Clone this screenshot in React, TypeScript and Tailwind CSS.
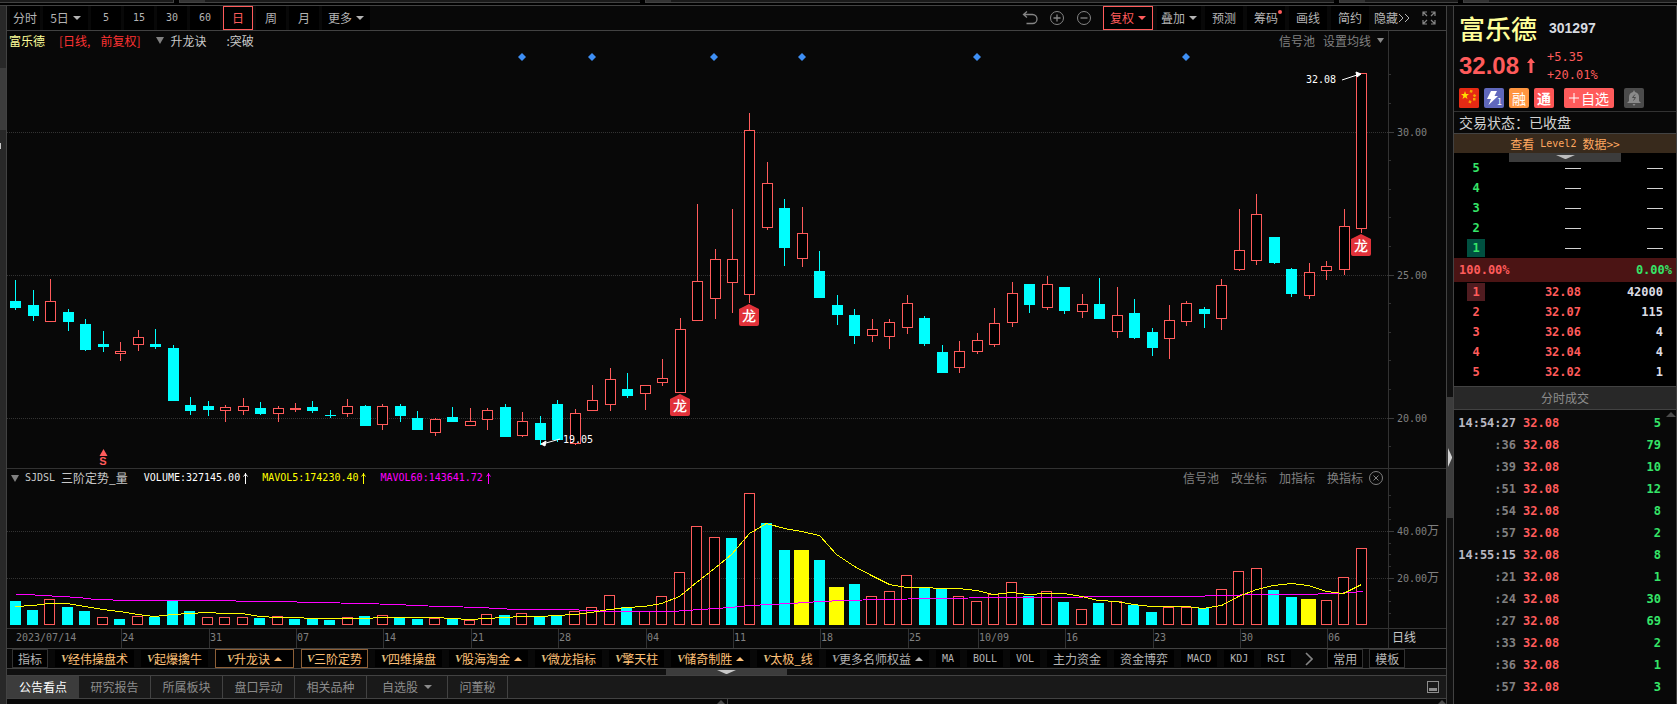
import type { ReactNode } from "react";
import clsx from "clsx";

type Tone = "up" | "down" | "mark";

// [high, body top, body bottom, low, tone]
type Candle = [number, number, number, number, "up" | "down"];

const CANDLES: Candle[] = [
  [280, 301, 308, 310, "down"],
  [290, 305, 316, 321, "down"],
  [279, 301, 322, 322, "up"],
  [309, 312, 322, 331, "down"],
  [319, 324, 350, 351, "down"],
  [331, 344, 347, 352, "down"],
  [342, 351, 354, 361, "up"],
  [330, 337, 345, 351, "up"],
  [329, 344, 347, 349, "down"],
  [345, 348, 401, 401, "down"],
  [397, 405, 411, 415, "down"],
  [401, 406, 410, 416, "down"],
  [405, 407, 411, 422, "up"],
  [398, 406, 411, 415, "up"],
  [402, 408, 414, 415, "down"],
  [406, 408, 414, 422, "up"],
  [403, 408, 410, 412, "up"],
  [401, 407, 411, 413, "down"],
  [410, 415, 416, 418, "down"],
  [399, 406, 414, 417, "up"],
  [405, 406, 426, 426, "down"],
  [404, 406, 425, 430, "up"],
  [404, 406, 416, 422, "down"],
  [411, 418, 430, 430, "down"],
  [418, 419, 433, 436, "up"],
  [407, 417, 422, 422, "down"],
  [408, 421, 426, 426, "up"],
  [408, 410, 420, 430, "up"],
  [404, 407, 437, 437, "down"],
  [412, 421, 436, 437, "up"],
  [416, 423, 440, 445, "down"],
  [400, 404, 440, 442, "down"],
  [409, 413, 444, 445, "up"],
  [385, 400, 411, 411, "up"],
  [368, 379, 405, 411, "up"],
  [373, 389, 396, 398, "down"],
  [385, 385, 394, 410, "up"],
  [359, 378, 383, 386, "up"],
  [318, 329, 393, 393, "up"],
  [204, 281, 321, 321, "up"],
  [249, 259, 299, 319, "up"],
  [209, 259, 283, 313, "up"],
  [113, 130, 295, 303, "up"],
  [162, 183, 228, 230, "up"],
  [199, 208, 248, 266, "down"],
  [207, 233, 259, 267, "up"],
  [251, 271, 298, 298, "down"],
  [295, 305, 315, 325, "down"],
  [309, 315, 336, 344, "down"],
  [319, 329, 336, 342, "up"],
  [319, 322, 337, 349, "up"],
  [295, 303, 328, 334, "up"],
  [316, 318, 344, 346, "down"],
  [345, 352, 373, 373, "down"],
  [341, 351, 368, 373, "up"],
  [333, 340, 352, 354, "up"],
  [308, 323, 345, 347, "up"],
  [282, 293, 323, 327, "up"],
  [284, 284, 305, 313, "down"],
  [276, 284, 308, 310, "up"],
  [287, 287, 311, 314, "down"],
  [294, 304, 312, 318, "up"],
  [278, 304, 319, 319, "down"],
  [287, 315, 332, 338, "up"],
  [299, 313, 338, 339, "down"],
  [328, 332, 348, 356, "down"],
  [305, 320, 339, 359, "up"],
  [301, 303, 322, 326, "up"],
  [307, 309, 314, 328, "down"],
  [279, 285, 319, 330, "up"],
  [209, 250, 270, 271, "up"],
  [194, 214, 261, 265, "up"],
  [237, 237, 263, 264, "down"],
  [268, 269, 294, 297, "down"],
  [263, 272, 296, 299, "up"],
  [261, 266, 271, 280, "up"],
  [209, 226, 270, 275, "up"],
  [73, 73, 229, 233, "up"],
];

const VOLUME_TOPS = [
  601, 610, 599, 607, 611, 617, 619, 616, 617, 601, 611, 617, 617, 617, 618, 616, 619, 619, 620, 617,
  616, 615, 618, 619, 618, 618, 620, 614, 615, 613, 616, 615, 611, 607, 595, 607, 611, 596, 572, 526,
  537, 538, 493, 523, 550, 550, 560, 587, 584, 596, 591, 575, 588, 589, 596, 601, 594, 582, 596, 591,
  602, 609, 603, 601, 605, 612, 607, 607, 608, 589, 571, 568, 590, 597, 599, 600, 577, 548,
];

const VOLUME_TONES =
  "CCRCCRCRCCCRRRCRCCCRCRCCRCRRCRCCRRRCRRRRRCRCCYCYCRRRCCRRRRCRCRCRCCRRCRRRCCYRRR";

const TONES: Record<string, Tone> = { R: "up", C: "down", Y: "mark" };

const VOLUME_BASE = 625;

const MA60 =
  "15,594 25,594 43,595 60,596 78,597 95,599 130,600 200,600 270,601 322,602 357,603 400,604 410,605 445,606 480,607 515,609 567,609 590,610 607,611 672,611 700,609 730,607 750,605 770,604 790,603 820,601 843,600 882,599 933,598 1004,597 1161,596 1180,596 1230,595 1249,594 1300,594 1335,593 1351,592 1363,591";

const PRICE_LINES = [
  { y: 132, label: "30.00" },
  { y: 275, label: "25.00" },
  { y: 418, label: "20.00" },
];

const PRICE_TICKS = [74, 103, 160, 189, 217, 246, 303, 332, 360, 389, 446];
const VOLUME_TICKS = [495, 507, 519, 543, 554, 566, 590, 601, 613];

const DATES: [number, string][] = [
  [121, "24"],
  [209, "31"],
  [296, "07"],
  [383, "14"],
  [471, "21"],
  [558, "28"],
  [646, "04"],
  [733, "11"],
  [820, "18"],
  [908, "25"],
  [978, "10/09"],
  [1065, "16"],
  [1153, "23"],
  [1240, "30"],
  [1327, "06"],
];

const SIGNALS = [522, 592, 714, 802, 977, 1186];

const DRAGONS = [
  { x: 680, y: 394 },
  { x: 749, y: 304 },
  { x: 1361, y: 234 },
];

const INDICATORS = [
  { name: "经伟操盘术" },
  { name: "起爆擒牛" },
  { name: "升龙诀", menu: true, active: true, wide: true },
  { name: "三阶定势", active: true },
  { name: "四维操盘" },
  { name: "股海淘金", menu: true },
  { name: "微龙指标" },
  { name: "擎天柱" },
  { name: "储奇制胜", menu: true },
  { name: "太极_线" },
];

const ASKS = ["5", "4", "3", "2", "1"];

const BIDS = [
  ["1", "32.08", "42000"],
  ["2", "32.07", "115"],
  ["3", "32.06", "4"],
  ["4", "32.04", "4"],
  ["5", "32.02", "1"],
];

const TRADES = [
  ["14:54:27", "5"],
  [":36", "79"],
  [":39", "10"],
  [":51", "12"],
  [":54", "8"],
  [":57", "2"],
  ["14:55:15", "8"],
  [":21", "1"],
  [":24", "30"],
  [":27", "69"],
  [":33", "2"],
  [":36", "1"],
  [":57", "3"],
];

const candleX = (i: number) => Math.round(15.3 + i * 17.48);
const volumeX = (i: number) => Math.floor(15 + i * 17.481);

function movingAverage() {
  const lead = [606, 605, 603, 603];
  return VOLUME_TOPS.map((_, i) => {
    if (i < 4) return `${volumeX(i)},${lead[i]}`;
    const avg = VOLUME_TOPS.slice(i - 4, i + 1).reduce((a, b) => a + b, 0) / 5;
    return `${volumeX(i)},${Math.round(avg)}`;
  }).join(" ");
}

function Caret({ up, className }: { up?: boolean; className?: string }) {
  return (
    <svg viewBox="0 0 8 4" className={clsx("h-1 w-2 shrink-0", className)} fill="currentColor" aria-hidden="true">
      <path d={up ? "M0 4L4 0L8 4Z" : "M0 0H8L4 4Z"} />
    </svg>
  );
}

function Mono({ children, className }: { children: ReactNode; className?: string }) {
  return <span className={clsx("font-['DejaVu_Sans_Mono',monospace] text-[10px]", className)}>{children}</span>;
}

function TopStrip() {
  return (
    <div className="flex h-[6px] border-b border-[#424242] bg-black">
      <div className="flex h-[3px] w-full gap-[5px]">
        <div className="w-[174px] border-r border-b border-[#424242] bg-[#1a1a1a]" />
        {["flex-[462]", "flex-[690]", "flex-[118]", "flex-[214]"].map((grow) => (
          <div key={grow} className={clsx("border-b border-l border-[#424242] bg-[#1a1a1a]", grow)}>
            <div className="h-[2px] w-[25px] bg-[#333333]" />
          </div>
        ))}
      </div>
    </div>
  );
}

function ToolButton({ children, className }: { children: ReactNode; className?: string }) {
  return (
    <button
      type="button"
      className={clsx("flex h-6 shrink-0 items-center justify-center whitespace-nowrap", className)}
    >
      {children}
    </button>
  );
}

function Toolbar() {
  return (
    <div className="flex h-[25px] items-start justify-between border-b border-[#424242] text-[#b4b4b4]">
      <div className="flex gap-[3px] pl-[3px]">
        <ToolButton className="w-[30px] bg-black">分时</ToolButton>
        <ToolButton className="w-[45px] gap-1 bg-black">
          <span>5日</span>
          <Caret />
        </ToolButton>
        {["5", "15", "30", "60"].map((m) => (
          <ToolButton key={m} className="w-[30px] bg-black">
            <Mono>{m}</Mono>
          </ToolButton>
        ))}
        <ToolButton className="w-[30px] border border-[#ff5b5b] bg-black text-[#ff5b5b]">日</ToolButton>
        <ToolButton className="w-[30px] bg-black">周</ToolButton>
        <ToolButton className="w-[30px] bg-black">月</ToolButton>
        <ToolButton className="w-[48px] gap-1 bg-black">
          更多
          <Caret />
        </ToolButton>
      </div>

      <div className="flex gap-1 pr-[10px]">
        <ToolButton className="w-[23px]">
          <svg viewBox="0 0 16 16" className="size-4" fill="none" stroke="#858585" aria-label="撤销">
            <path d="M5 1.5L1.5 4.5L5 7.5M2 4.5H10.5A4.5 4.5 0 0 1 10.5 13.5H4.5" strokeWidth="1.3" />
          </svg>
        </ToolButton>
        <ToolButton className="w-[23px]">
          <svg viewBox="0 0 16 16" className="size-4" fill="none" stroke="#858585" aria-label="放大">
            <circle cx="8" cy="8" r="6.5" />
            <path d="M4.5 8H11.5M8 4.5V11.5" strokeWidth="1.3" />
          </svg>
        </ToolButton>
        <ToolButton className="w-[23px]">
          <svg viewBox="0 0 16 16" className="size-4" fill="none" stroke="#858585" aria-label="缩小">
            <circle cx="8" cy="8" r="6.5" />
            <path d="M4.5 8H11.5" strokeWidth="1.3" />
          </svg>
        </ToolButton>
        <ToolButton className="ml-1 w-[50px] gap-1 border border-[#ff5b5b] bg-black text-[#ff5b5b]">
          复权
          <Caret />
        </ToolButton>
        <ToolButton className="w-[44px] gap-1 bg-black">
          叠加
          <Caret />
        </ToolButton>
        <ToolButton className="w-[38px] bg-black">预测</ToolButton>
        <ToolButton className="relative w-[38px] bg-black">
          筹码
          <span className="absolute top-1 right-[3px] size-1 rounded-full bg-[#ff5b5b]" />
        </ToolButton>
        <ToolButton className="w-[38px] bg-black">画线</ToolButton>
        <ToolButton className="w-[38px] bg-black">简约</ToolButton>
        <ToolButton className="w-[38px]">
          隐藏
          <svg viewBox="0 0 12 10" className="h-[10px] w-3" fill="none" stroke="currentColor" aria-hidden="true">
            <path d="M1 1L5 5L1 9M7 1L11 5L7 9" />
          </svg>
        </ToolButton>
        <ToolButton className="w-[21px] justify-end">
          <svg viewBox="0 0 14 14" className="size-[14px]" fill="none" stroke="#858585" strokeWidth="1.2" aria-label="全屏">
            <path d="M1 5V1H5M1 1L5 5M9 1H13V5M13 1L9 5M1 9V13H5M1 13L5 9M13 9V13H9M13 13L9 9" />
          </svg>
        </ToolButton>
      </div>
    </div>
  );
}

function PriceHeader() {
  return (
    <div className="flex h-[21px] text-xs leading-[18px]">
      <div className="flex flex-1 items-center justify-between pr-1 pb-[2px] pl-[2px]">
        <div className="flex items-center whitespace-nowrap">
          <span className="text-[#ffff99]">富乐德</span>
          <span className="ml-[14px] flex gap-[10px] text-[#ff3232]">
            <span>[日线,</span>
            <span>前复权]</span>
          </span>
          <svg viewBox="0 0 8 7" className="ml-4 h-[7px] w-2" fill="#808080" aria-hidden="true">
            <path d="M0 0H8L4 7Z" />
          </svg>
          <span className="ml-[6px] text-[#c8c8c8]">升龙诀</span>
          <span className="ml-5 text-[#c8c8c8]">:突破</span>
        </div>
        <div className="flex items-center gap-2 text-[#808080]">
          <button type="button">信号池</button>
          <button type="button" className="flex items-center gap-[6px]">
            设置均线
            <svg viewBox="0 0 7 5" className="h-[5px] w-[7px]" fill="#8a8a8a" aria-hidden="true">
              <path d="M0 0H7L3.5 5Z" />
            </svg>
          </button>
        </div>
      </div>
      <div className="w-[58px] border-l border-[#323232]" />
    </div>
  );
}

function PriceChart() {
  return (
    <svg
      viewBox="7 52 1439 416"
      className="block h-auto w-full overflow-visible font-['DejaVu_Sans_Mono',monospace] text-[10px]"
      role="img"
      aria-label="K线"
    >
      <g shapeRendering="crispEdges" fill="none">
        <path d="M1388.5 52V468" stroke="#323232" />
        {PRICE_LINES.map(({ y }) => (
          <g key={y}>
            <path d={`M7 ${y + 0.5}H1388`} stroke="#333333" strokeDasharray="1 1" />
            <path d={`M1388 ${y + 0.5}H1394`} stroke="#3c3c3c" />
          </g>
        ))}
        {PRICE_TICKS.map((y) => (
          <path key={y} d={`M1388 ${y + 0.5}H1391`} stroke="#323232" />
        ))}
        {CANDLES.map(([high, top, bottom, low, tone], i) => {
          const x = candleX(i);
          if (tone === "down") {
            return (
              <g key={i} fill="#00ffff">
                <rect x={x} y={high} width="1" height={low - high} />
                <rect x={x - 5} y={top} width="11" height={bottom - top} />
              </g>
            );
          }
          return (
            <g key={i} stroke="#ff5b5b">
              <path d={`M${x + 0.5} ${high}V${top}M${x + 0.5} ${bottom}V${low}`} />
              <rect x={x - 4.5} y={top + 0.5} width="10" height={bottom - top - 1} fill="#000000" />
            </g>
          );
        })}
      </g>

      {PRICE_LINES.map(({ y, label }) => (
        <text key={y} x="1397" y={y + 4} fill="#808080">
          {label}
        </text>
      ))}

      {SIGNALS.map((x) => (
        <path key={x} d={`M${x} 53L${x + 4} 57L${x} 61L${x - 4} 57Z`} fill="#3e8ff5" />
      ))}

      {DRAGONS.map(({ x, y }) => (
        <g key={x}>
          <path
            d={`M${x} ${y}L${x + 10} ${y + 5}V${y + 20}Q${x + 10} ${y + 22} ${x + 8} ${y + 22}H${x - 8}Q${x - 10} ${y + 22} ${x - 10} ${y + 20}V${y + 5}Z`}
            fill="#e2323a"
          />
          <text
            x={x}
            y={y + 17}
            textAnchor="middle"
            fill="#ffffff"
            className="font-['Noto_Sans_CJK_SC',sans-serif] text-[14px] font-medium"
          >
            龙
          </text>
        </g>
      ))}

      <path d="M103.5 449L107.5 456H99.5Z" fill="#ff5b5b" />
      <text x="103" y="465" textAnchor="middle" fill="#ff5b5b" className="font-['Liberation_Sans',sans-serif] text-[11px] font-bold">
        S
      </text>

      <g fill="#ffffff" stroke="#ffffff">
        <path d="M1342 80L1357 75" />
        <path d="M1356 72L1361 74L1357 77Z" />
        <path d="M560 439L546 443" />
        <path d="M541 444L546 441L545 446Z" />
      </g>
      <text x="1306" y="83" fill="#ffffff">
        32.08
      </text>
      <text x="563" y="443" fill="#ffffff">
        19.05
      </text>
    </svg>
  );
}

function VolumeStat({ children, className }: { children: ReactNode; className?: string }) {
  return (
    <span className={clsx("flex items-center gap-[3px]", className)}>
      <Mono>{children}</Mono>
      <svg viewBox="0 0 5 11" className="h-[11px] w-[5px]" fill="none" stroke="currentColor" aria-hidden="true">
        <path d="M2.5 0V11M0.5 3.5L2.5 1L4.5 3.5" />
      </svg>
    </span>
  );
}

function VolumeHeader() {
  return (
    <div className="flex h-5 border-t border-[#323232] text-xs leading-[18px]">
      <div className="flex flex-1 items-center justify-between pr-[5px] pb-px pl-1">
        <div className="flex items-center whitespace-nowrap">
          <svg viewBox="0 0 8 7" className="h-[7px] w-2" fill="#808080" aria-hidden="true">
            <path d="M0 0H8L4 7Z" />
          </svg>
          <span className="ml-[6px] flex gap-[6px] text-[#c8c8c8]">
            <Mono>SJDSL</Mono>
            <span>三阶定势_量</span>
          </span>
          <VolumeStat className="ml-4 text-white">VOLUME:327145.00</VolumeStat>
          <VolumeStat className="ml-[14px] text-[#ffff00]">MAVOL5:174230.40</VolumeStat>
          <VolumeStat className="ml-[14px] text-[#ff00ff]">MAVOL60:143641.72</VolumeStat>
        </div>
        <div className="flex items-center gap-3 text-[#808080]">
          <button type="button">信号池</button>
          <button type="button">改坐标</button>
          <button type="button">加指标</button>
          <div className="flex items-center gap-[6px]">
            <button type="button">换指标</button>
            <button type="button" aria-label="关闭">
              <svg viewBox="0 0 14 14" className="size-[14px]" fill="none" stroke="currentColor">
                <circle cx="7" cy="7" r="6.5" />
                <path d="M4.5 4.5L9.5 9.5M9.5 4.5L4.5 9.5" />
              </svg>
            </button>
          </div>
        </div>
      </div>
      <div className="w-[58px] border-l border-[#323232]" />
    </div>
  );
}

function VolumeChart() {
  return (
    <svg
      viewBox="7 488 1439 160"
      className="block h-auto w-full font-['DejaVu_Sans_Mono',monospace] text-[10px]"
      role="img"
      aria-label="成交量"
    >
      <g shapeRendering="crispEdges" fill="none">
        <path d="M1388.5 488V648M7 628.5H1446" stroke="#323232" />
        {[531, 578].map((y) => (
          <g key={y}>
            <path d={`M7 ${y + 0.5}H1388`} stroke="#333333" strokeDasharray="1 1" />
            <path d={`M1388 ${y + 0.5}H1394`} stroke="#3c3c3c" />
          </g>
        ))}
        {VOLUME_TICKS.map((y) => (
          <path key={y} d={`M1388 ${y + 0.5}H1391`} stroke="#323232" />
        ))}
        {VOLUME_TOPS.map((top, i) => {
          const x = volumeX(i);
          const tone = TONES[VOLUME_TONES[i]];
          if (tone === "mark") {
            return <rect key={i} x={x - 7} y={top} width="15" height={VOLUME_BASE - top} fill="#ffff00" />;
          }
          if (tone === "down") {
            return <rect key={i} x={x - 5} y={top} width="11" height={VOLUME_BASE - top} fill="#00ffff" />;
          }
          return (
            <rect
              key={i}
              x={x - 4.5}
              y={top + 0.5}
              width="10"
              height={VOLUME_BASE - top - 1}
              stroke="#ff5b5b"
              fill="#000000"
            />
          );
        })}
        <g transform="translate(0.5 0.5)">
          <polyline points={MA60} stroke="#ff00ff" />
          <polyline points={movingAverage()} stroke="#ffff00" />
        </g>
        {DATES.map(([x]) => (
          <path key={x} d={`M${x + 0.5} 629V648`} stroke="#323232" />
        ))}
      </g>

      <g fill="#808080">
        <text x="16" y="641">
          2023/07/14
        </text>
        {DATES.map(([x, label]) => (
          <text key={x} x={x + 1} y="641">
            {label}
          </text>
        ))}
        {[
          { y: 531, label: "40.00" },
          { y: 578, label: "20.00" },
        ].map(({ y, label }) => (
          <text key={y} x="1397" y={y + 4}>
            {label}
            <tspan className="font-['Noto_Sans_CJK_SC',sans-serif] text-[12px]">万</tspan>
          </text>
        ))}
      </g>
      <text x="1392" y="642" fill="#c8c8c8" className="font-['Noto_Sans_CJK_SC',sans-serif] text-[12px]">
        日线
      </text>
    </svg>
  );
}

function VipMark({ muted }: { muted?: boolean }) {
  return (
    <span
      className={clsx(
        "w-[7px] font-['Liberation_Serif',serif] text-[11px] font-bold italic",
        muted ? "text-[#9c9c9c]" : "text-[#e0c080]",
      )}
    >
      V
    </span>
  );
}

function IndicatorBar() {
  const item = "flex h-[17px] shrink-0 items-center bg-black px-[6px] whitespace-nowrap";
  const boxed = "flex h-[19px] shrink-0 items-center border border-[#323232] bg-black px-[5px] whitespace-nowrap";
  return (
    <div className="flex h-[21px] items-center gap-[7px] overflow-hidden border-y border-[#424242] pl-[5px] text-[#b4b4b4]">
      <button type="button" className={boxed}>
        指标
      </button>
      {INDICATORS.map(({ name, menu, active, wide }) => (
        <button
          key={name}
          type="button"
          className={clsx(
            "flex shrink-0 items-center bg-black whitespace-nowrap text-[#ffc078]",
            active ? "h-[19px] border border-[#8c5f37]" : "h-[17px] px-[6px]",
            active && (wide ? "px-[11px]" : "px-[5px]"),
          )}
        >
          <VipMark />
          {name}
          {menu && <Caret up className="ml-1" />}
        </button>
      ))}
      <button type="button" className={item}>
        <VipMark muted />
        更多名师权益
        <Caret up className="ml-1" />
      </button>
      {["MA", "BOLL", "VOL"].map((name) => (
        <button key={name} type="button" className={item}>
          <Mono>{name}</Mono>
        </button>
      ))}
      <button type="button" className={item}>
        主力资金
      </button>
      <button type="button" className={item}>
        资金博弈
      </button>
      {["MACD", "KDJ", "RSI"].map((name) => (
        <button key={name} type="button" className={item}>
          <Mono>{name}</Mono>
        </button>
      ))}
      <button type="button" className="flex w-[22px] shrink-0 justify-center" aria-label="更多指标">
        <svg viewBox="0 0 8 14" className="h-[14px] w-2" fill="none" stroke="#858585" strokeWidth="1.6">
          <path d="M1 1L7 7L1 13" />
        </svg>
      </button>
      <div className="flex gap-[6px]">
        <button type="button" className={boxed}>
          常用
        </button>
        <button type="button" className={boxed}>
          模板
        </button>
      </div>
    </div>
  );
}

function BottomTabs() {
  const tab = "flex h-full w-[72px] items-center justify-center border-r border-[#424242]";
  return (
    <div className="flex h-6 items-center justify-between border-y border-[#424242] bg-[#191919] text-[#8c8c8c]">
      <div className="flex h-full">
        <button type="button" className="flex h-full w-[72px] items-center justify-center bg-[#3c3c3c] text-white">
          公告看点
        </button>
        {["研究报告", "所属板块", "盘口异动", "相关品种"].map((name) => (
          <button key={name} type="button" className={tab}>
            {name}
          </button>
        ))}
        <button type="button" className="flex h-full w-[81px] items-center justify-center gap-[6px] border-r border-[#424242]">
          自选股
          <Caret />
        </button>
        <button type="button" className="flex h-full w-[60px] items-center justify-center border-r border-[#424242]">
          问董秘
        </button>
      </div>
      <button type="button" className="mr-[7px]" aria-label="收起">
        <svg viewBox="0 0 12 12" className="size-3" fill="none" stroke="#8c8c8c">
          <rect x="0.5" y="0.5" width="11" height="11" />
          <rect x="2" y="7" width="8" height="3" fill="#8c8c8c" stroke="none" />
        </svg>
      </button>
    </div>
  );
}

function StockBadges() {
  return (
    <div className="flex h-[23px] items-start pl-[5px]">
      <svg viewBox="0 0 20 20" className="size-5" aria-label="中国">
        <rect width="20" height="20" rx="1.5" fill="#e62a14" />
        <path d="M6 3L7 6H10L7.6 8L8.5 11L6 9.2L3.5 11L4.4 8L2 6H5Z" fill="#ffde00" />
        <g fill="#f5a800">
          <rect x="11" y="2" width="2.5" height="2.5" transform="rotate(15 12 3)" />
          <rect x="14.5" y="6" width="2.5" height="2.5" transform="rotate(30 15 7)" />
          <rect x="14" y="10" width="2.5" height="2.5" />
          <rect x="10" y="12.5" width="2.5" height="2.5" transform="rotate(20 11 13)" />
        </g>
      </svg>
      <span className="relative ml-[5px] size-5 rounded-[2px] bg-[#6068bc]">
        <svg viewBox="0 0 20 20" className="size-5" fill="#ffffff" aria-hidden="true">
          <path d="M7 3H13L10.5 8H14L4.5 17L7 11H3Z" />
        </svg>
        <span className="absolute right-[2px] bottom-0 text-[9px] leading-3 text-white">1</span>
      </span>
      <span className="ml-[5px] size-5 rounded-[2px] bg-[#ff9540] text-center text-sm leading-5 text-white">融</span>
      <span className="ml-[5px] size-5 rounded-[2px] bg-[#ff5555] text-center text-sm leading-5 font-bold text-white">
        通
      </span>
      <button
        type="button"
        className="ml-[10px] flex h-5 w-[50px] items-center justify-center gap-[2px] rounded-[2px] bg-[#ff5b5b] text-sm leading-5 text-white"
      >
        <svg viewBox="0 0 10 10" className="size-[10px] shrink-0" stroke="currentColor" aria-hidden="true">
          <path d="M0 5H10M5 0V10" />
        </svg>
        自选
      </button>
      <button type="button" className="ml-[10px] size-5 rounded-[2px] bg-[#4b4b4b]" aria-label="提醒">
        <svg viewBox="0 0 20 20" className="size-5">
          <path d="M10 2L11 4Q15 5 15 9V13L17 15H3L5 13V9Q5 5 9 4Z" fill="#8a8a8a" />
          <path d="M8.5 16H11.5L10 18Z" fill="#8a8a8a" />
          <path d="M11 6.5L8.5 9.5H11.5L9.5 12.5" stroke="#4b4b4b" fill="none" />
        </svg>
      </button>
    </div>
  );
}

const PRICE_FONT = "font-['DejaVu_Sans_Mono',monospace] text-xs font-bold";

function QuotePanel() {
  return (
    <aside className="flex w-[223px] shrink-0 flex-col border-r border-[#424242]">
      <div className="flex h-[41px] items-center pt-[3px] pl-[5px]">
        <h1 className="text-[26px] leading-9 font-medium text-[#ffff99]">富乐德</h1>
        <span className="ml-3 font-['Liberation_Sans',sans-serif] text-sm font-bold text-[#d7dbe0]">301297</span>
      </div>
      <div className="mb-1 flex h-[37px] items-center pl-[5px] text-[#ff5b5b]">
        <span className="font-['Liberation_Sans',sans-serif] text-2xl leading-7 font-bold">32.08</span>
        <svg viewBox="0 0 8 15" className="ml-[8px] h-[15px] w-2" fill="currentColor" aria-hidden="true">
          <path d="M4 0L8 5H5.5V15H2.5V5H0Z" />
        </svg>
        <div className="ml-3 flex flex-col font-['DejaVu_Sans_Mono',monospace] text-xs leading-[18px]">
          <span>+5.35</span>
          <span>+20.01%</span>
        </div>
      </div>
      <StockBadges />
      <div className="h-[22px] border-t border-[#323232] pl-[5px] text-sm leading-5 text-[#d2d2d2]">
        交易状态：已收盘
      </div>
      <a
        href="#level2"
        className="flex h-5 items-center justify-center gap-[6px] border-t border-[#424242] bg-[#382a1c] text-[#ffa860]"
      >
        查看 <Mono>Level2</Mono> 数据&gt;&gt;
      </a>

      <div className="bg-black">
        <div className="relative h-[5px]">
          <div className="absolute left-[55px] flex h-[9px] w-[112px] justify-center bg-[#3c3c3c] pt-[2px] text-[#bcbcbc]">
            <svg viewBox="0 0 19 4" className="h-1 w-[19px]" fill="currentColor" aria-hidden="true">
              <path d="M0 0H19L10 4H9Z" />
            </svg>
          </div>
        </div>
        <table className={clsx("w-full table-fixed", PRICE_FONT)}>
          <tbody>
            {ASKS.map((level) => (
              <tr key={level} className="h-5">
                <td className="w-[44px] p-0 text-center text-[#35e568]">
                  <span
                    className={clsx("ml-[13px] block size-[18px] leading-[18px]", level === "1" && "bg-[#005040]")}
                  >
                    {level}
                  </span>
                </td>
                <td className="p-0">
                  <div className="ml-auto h-px w-4 bg-[#d2d2d2]" />
                </td>
                <td className="w-[95px] p-0 pr-[13px]">
                  <div className="ml-auto h-px w-4 bg-[#d2d2d2]" />
                </td>
              </tr>
            ))}
          </tbody>
        </table>
        <div className={clsx("flex h-6 items-center justify-between bg-[#4b1414] pr-1 pl-[5px]", PRICE_FONT)}>
          <span className="text-[#ff5b5b]">100.00%</span>
          <span className="text-[#35e568]">0.00%</span>
        </div>
        <table className={clsx("w-full table-fixed", PRICE_FONT)}>
          <tbody>
            {BIDS.map(([level, price, volume]) => (
              <tr key={level} className="h-5 text-[#ff5b5b]">
                <td className="w-[44px] p-0 text-center">
                  <span
                    className={clsx("ml-[13px] block size-[18px] leading-[18px]", level === "1" && "bg-[#501c20]")}
                  >
                    {level}
                  </span>
                </td>
                <td className="p-0 text-right">{price}</td>
                <td className="w-[95px] p-0 pr-[13px] text-right text-[#dcdce4]">{volume}</td>
              </tr>
            ))}
          </tbody>
        </table>
        <div className="h-[4px]" />
      </div>

      <h2 className="h-6 border-y border-[#424242] bg-[#282828] text-center text-xs leading-[22px] text-[#8c8c8c]">
        分时成交
      </h2>
      <div className="relative pt-[2px]">
        <svg viewBox="0 0 10 5" className="absolute top-[2px] right-0 h-[5px] w-[10px]" fill="#4b4b4b" aria-hidden="true">
          <path d="M0 5L5 0L10 5Z" />
        </svg>
        <table className={clsx("w-full table-fixed", PRICE_FONT)}>
          <tbody>
            {TRADES.map(([time, volume]) => (
              <tr key={time + volume} className="h-[22px]">
                <td className={clsx("w-[62px] p-0 text-right", time.length > 3 ? "text-[#b9b9c3]" : "text-[#808080]")}>
                  {time}
                </td>
                <td className="p-0 pl-[7px] text-[#ff5b5b]">32.08</td>
                <td className="w-[60px] p-0 pr-[15px] text-right text-[#35e568]">{volume}</td>
              </tr>
            ))}
          </tbody>
        </table>
      </div>
    </aside>
  );
}

export default function App() {
  return (
    <div className="flex min-h-screen flex-col overflow-hidden bg-[#080808] font-['Noto_Sans_CJK_SC',sans-serif] text-xs">
      <TopStrip />
      <div className="flex flex-1">
        <div className="flex w-[7px] shrink-0 flex-col border-r border-[#424242] bg-[#282828]">
          <div className="mt-[62px] h-[62px] bg-[#3c3c3c]" />
          <div className="mt-[13px] h-[6px] w-px bg-[#c8c8c8]" />
        </div>

        <main className="flex min-w-0 flex-1 flex-col">
          <Toolbar />
          <PriceHeader />
          <PriceChart />
          <VolumeHeader />
          <VolumeChart />
          <IndicatorBar />
          <div className="flex h-[6px] bg-[#101010]">
            <div className="flex-[659]" />
            <div className="flex w-[121px] justify-center bg-[#3c3c3c] pt-px text-[#c8c8c8]">
              <svg viewBox="0 0 19 4" className="h-1 w-[19px]" fill="currentColor" aria-hidden="true">
                <path d="M0 0H19L10 4H9Z" />
              </svg>
            </div>
            <div className="flex-[659]" />
          </div>
          <BottomTabs />
          <div className="flex flex-1">
            <div className="flex flex-1 items-end justify-end border-r border-[#424242] pr-[2px]">
              <Caret up className="text-[#4b4b4b]" />
            </div>
            <div className="flex flex-1 items-end justify-end">
              <Caret up className="text-[#4b4b4b]" />
            </div>
          </div>
        </main>

        <div className="flex w-2 shrink-0 flex-col border-x border-[#424242] bg-[#101010]">
          <div className="mt-[391px] flex h-[121px] items-center bg-[#3c3c3c]">
            <svg viewBox="0 0 4 19" className="ml-px h-[19px] w-1" fill="#d2d2d2" aria-hidden="true">
              <path d="M0 0L4 9V10L0 19Z" />
            </svg>
          </div>
        </div>

        <QuotePanel />
      </div>
    </div>
  );
}
